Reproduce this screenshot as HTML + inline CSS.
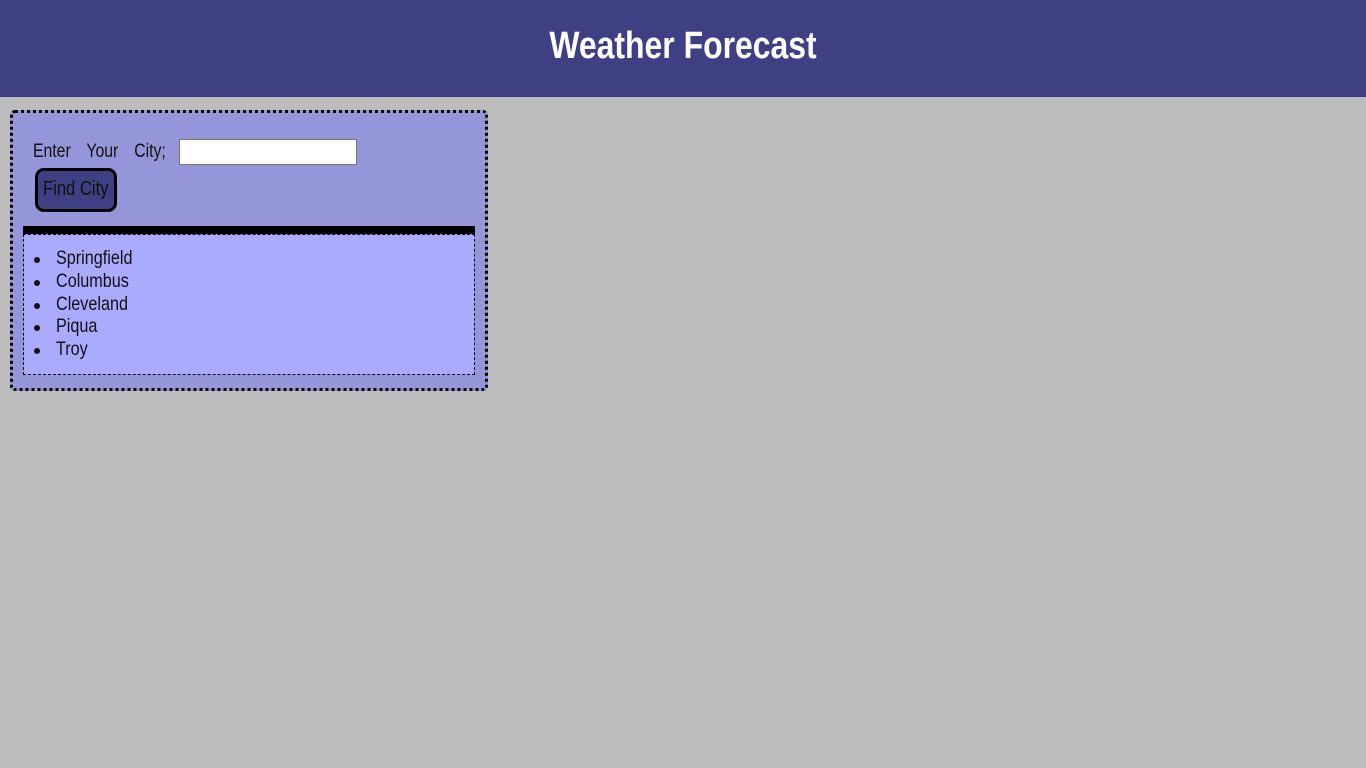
<!DOCTYPE html>
<html><head><style>
*{margin:0;padding:0;box-sizing:border-box}
body{width:1366px;height:768px;background:#bcbcbc;font-family:"Liberation Sans",sans-serif;overflow:hidden;position:relative}
.hdr{position:absolute;left:0;top:0;width:1366px;height:97px;background:#3f4083}
.hdr span{position:absolute;left:683px;top:24px;font-size:38px;font-weight:bold;color:#fff;white-space:nowrap;transform:translateX(-50%) scaleX(0.84);line-height:44px}
.s{display:inline-block;transform:scaleX(0.83);transform-origin:0 50%;white-space:nowrap}
.box{position:absolute;left:10px;top:110px;width:478px;height:281px;background:#9595d9;border:3px dotted #000;border-radius:5px}
.lbl{position:absolute;left:20px;top:28px;font-size:19px;color:#111;word-spacing:14px}
.inp{position:absolute;left:166px;top:26px;width:178px;height:26px;background:#fff;border:1px solid #777}
.btn{position:absolute;left:22px;top:55px;width:82px;height:44px;background:#3f4083;border:3px solid #000;border-radius:9px;font-size:20px;color:#111;line-height:36px;padding-left:5px}
.bar{position:absolute;left:10px;top:113px;width:452px;height:9px;background:#000}
.list{position:absolute;left:10px;top:121px;width:452px;height:141px;background:#aaf;border:1px dashed #000;list-style:none;padding:12px 0 0 0;font-size:19.5px;line-height:22.8px;color:#111}
.list li{position:relative;padding-left:32px}
.list li:before{content:"";position:absolute;left:10px;top:10px;width:6px;height:6px;border-radius:50%;background:#111}
</style></head><body>
<div class="hdr"><span>Weather Forecast</span></div>
<div class="box">
<div class="lbl"><span class="s">Enter Your City;</span></div>
<div class="inp"></div>
<div class="btn"><span class="s">Find City</span></div>
<div class="bar"></div>
<ul class="list"><li><span class="s">Springfield</span></li><li><span class="s">Columbus</span></li><li><span class="s">Cleveland</span></li><li><span class="s">Piqua</span></li><li><span class="s">Troy</span></li></ul>
</div>
</body></html>
